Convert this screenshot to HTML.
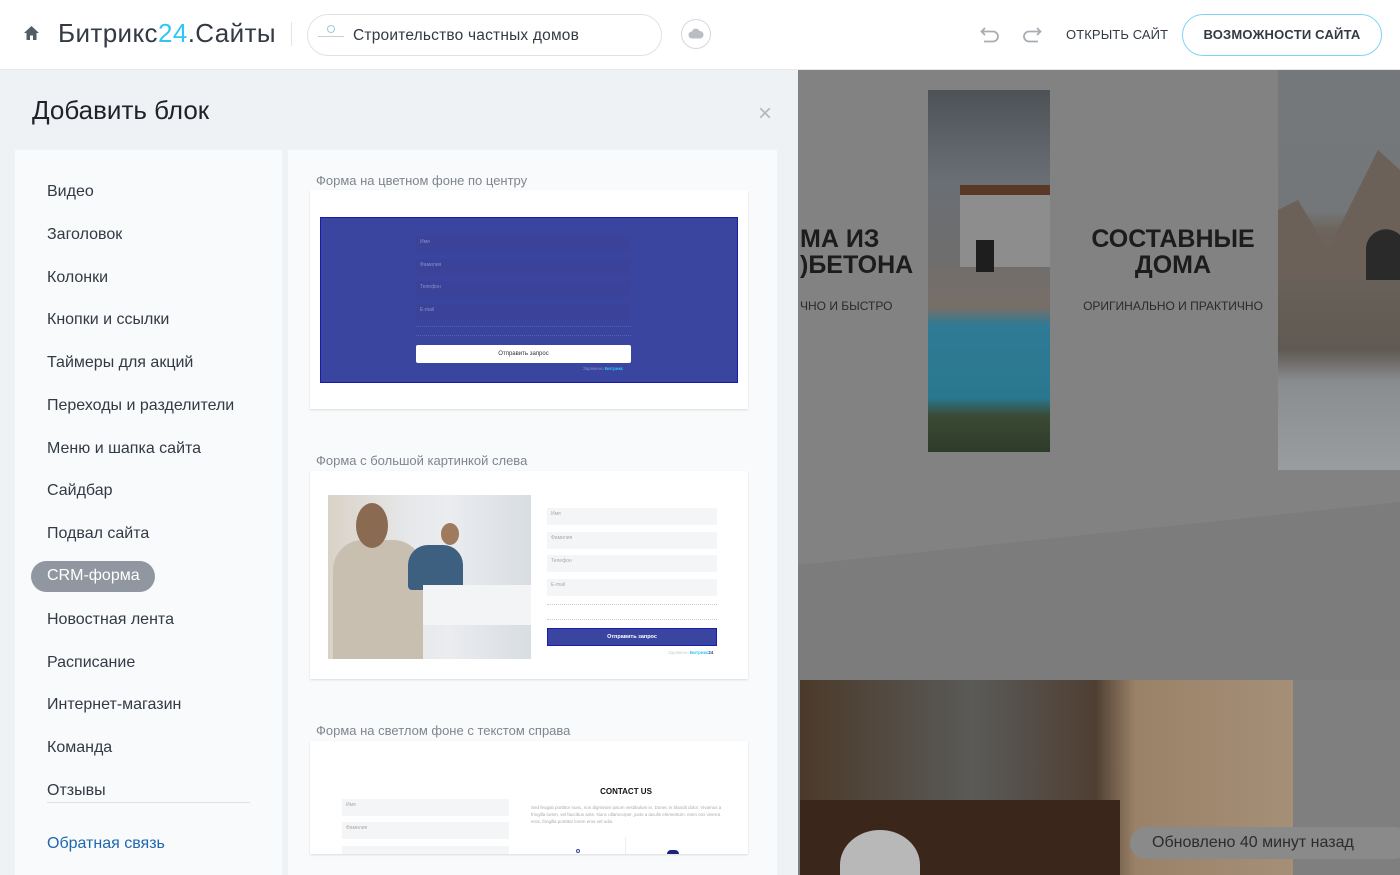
<!DOCTYPE html>
<html><head><meta charset="utf-8"><style>
*{margin:0;padding:0;box-sizing:border-box}
html,body{width:1400px;height:875px;overflow:hidden}
body{font-family:"Liberation Sans",sans-serif;background:#7f7f7f;position:relative}
.hdr{position:absolute;left:0;top:0;width:1400px;height:70px;background:#fff;border-bottom:1px solid #e6e8ea}
.abs{position:absolute}
.panel{position:absolute;left:0;top:70px;width:798px;height:805px;background:#eef2f4}
.side{position:absolute;left:15px;top:150px;width:267px;height:725px;background:#f8fafb}
.side div{position:absolute;left:32px;font-size:16px;color:#333a44}
.col{position:absolute;left:288px;top:150px;width:489px;height:725px;background:#f8fafb}
.ttl{position:absolute;left:316px;font-size:13px;color:#80868e}
.card{position:absolute;left:310px;width:438px;background:#fff;box-shadow:0 1px 2px rgba(0,0,0,.12)}
.inp{position:absolute;font-size:5px;color:#aaa;padding:3px 4px}
</style></head><body>
<div class="hdr">
 <svg class="abs" style="left:23px;top:25px" width="17" height="16" viewBox="0 0 17 16"><path d="M8.5 1 L16 8 H13.5 V15 H10 V10.5 H7 V15 H3.5 V8 H1 Z" fill="#535c69"/></svg>
 <div class="abs" style="left:58px;top:18px;font-size:26px;color:#333a44;letter-spacing:.4px">Битрикс<span style="color:#2fc6f6">24</span>.Сайты</div>
 <div class="abs" style="left:291px;top:22px;width:1px;height:24px;background:#e2e4e6"></div>
 <div class="abs" style="left:307px;top:14px;width:355px;height:42px;border:1px solid #dfe2e5;border-radius:21px"></div>
 <div class="abs" style="left:318px;top:25px;width:26px;height:14px"><div style="margin:0 auto;width:8px;height:8px;border-radius:50%;border:1px solid #9cd"></div><div style="margin-top:3px;height:1px;background:#ccc"></div></div>
 <div class="abs" style="left:353px;top:27px;font-size:15.5px;color:#333a44;letter-spacing:.2px">Строительство частных домов</div>
 <div class="abs" style="left:681px;top:19px;width:30px;height:30px;border:1px solid #d5d8db;border-radius:50%"></div>
 <svg class="abs" style="left:688px;top:28px" width="16" height="11" viewBox="0 0 16 11"><path d="M4 10.5 A3.5 3.5 0 0 1 4 3.5 A4 4 0 0 1 11.5 3 A3.5 3.5 0 0 1 12 10.5 Z" fill="#b9bec4"/></svg>
 <svg class="abs" style="left:980px;top:26px" width="20" height="18" viewBox="0 0 20 18"><path d="M5 2 L1.5 5.5 L5 9 M1.5 5.5 H13 A5 5 0 0 1 13 15.5 H4" fill="none" stroke="#a8adb3" stroke-width="1.8"/></svg>
 <svg class="abs" style="left:1022px;top:26px" width="20" height="18" viewBox="0 0 20 18"><path d="M15 2 L18.5 5.5 L15 9 M18.5 5.5 H7 A5 5 0 0 0 7 15.5 H16" fill="none" stroke="#a8adb3" stroke-width="1.8"/></svg>
 <div class="abs" style="left:1066px;top:27px;font-size:13px;color:#333a44;letter-spacing:.1px">ОТКРЫТЬ САЙТ</div>
 <div class="abs" style="left:1182px;top:14px;width:200px;height:42px;border:1px solid #7fd4f5;border-radius:21px;font-size:13px;font-weight:bold;color:#333a44;text-align:center;line-height:40px;letter-spacing:.2px">ВОЗМОЖНОСТИ САЙТА</div>
</div>

<div class="abs" style="left:798px;top:70px;width:602px;height:495px;background:#828282"></div>
<svg class="abs" style="left:798px;top:480px" width="602" height="110"><polygon points="0,85 602,22 602,110 0,110" fill="#7c7c7c"/></svg>
<div class="abs" style="left:798px;top:565px;width:602px;height:115px;background:#7c7c7c"></div>
<div class="abs" style="left:800px;top:226px;font-size:25px;font-weight:bold;color:#1c1c1c;line-height:26px">МА ИЗ<br>)БЕТОНА</div>
<div class="abs" style="left:800px;top:299px;font-size:12px;color:#2a2a2a">ЧНО И БЫСТРО</div>
<div class="abs" style="left:1070px;top:226px;width:206px;text-align:center;font-size:25px;font-weight:bold;color:#1c1c1c;line-height:26px">СОСТАВНЫЕ<br>ДОМА</div>
<div class="abs" style="left:1070px;top:299px;width:206px;text-align:center;font-size:12px;color:#2a2a2a">ОРИГИНАЛЬНО И ПРАКТИЧНО</div>
<div class="abs" style="left:928px;top:90px;width:122px;height:362px;overflow:hidden;background:linear-gradient(#4d5257 0%,#6a6f75 25%,#6e6e6e 45%,#786e68 60%,#2f7a95 65%,#2a7890 85%,#3a4a34 90%,#2e3b2a 100%)">
 <div class="abs" style="left:32px;top:95px;width:90px;height:82px;background:#8d8d8d"></div>
 <div class="abs" style="left:32px;top:95px;width:90px;height:10px;background:#5a3a26"></div>
 <div class="abs" style="left:48px;top:150px;width:18px;height:32px;background:#1e1e1e"></div></div>
<div class="abs" style="left:1278px;top:70px;width:122px;height:400px;overflow:hidden;background:linear-gradient(#74787b 0%,#74777a 35%,#6d655c 40%,#5f5a53 70%,#8a8d90 78%,#9a9da0 100%)">
 <svg class="abs" style="left:0;top:70px" width="122" height="140"><polygon points="0,70 20,60 50,110 100,10 122,30 122,140 0,140" fill="#6b6158"/><path d="M88 140 V110 A20 20 0 0 1 122 95 V140 Z" fill="#2a2a2a"/></svg></div>
<div class="abs" style="left:800px;top:680px;width:493px;height:195px;overflow:hidden;background:linear-gradient(90deg,#4b3a2a 0%,#5a5a58 35%,#4f3f33 60%,#9a8268 68%,#a58f77 100%)">
 <div class="abs" style="left:0;top:120px;width:320px;height:75px;background:#3b261c"></div>
 <div class="abs" style="left:40px;top:150px;width:80px;height:70px;border-radius:50% 50% 0 0;background:#b8b8b8"></div></div>
<div class="abs" style="left:1130px;top:827px;width:280px;height:32px;border-radius:16px;background:#8a8a8a;font-size:16px;color:#2c2c2c;line-height:32px;padding-left:22px">Обновлено 40 минут назад</div>

<div class="panel">
 <div class="abs" style="left:32px;top:25px;font-size:26px;color:#1f2329;font-weight:300">Добавить блок</div>
 <div class="abs" style="left:758px;top:30px;font-size:24px;color:#b4b8bd">×</div>
</div>
<div class="side">
 <div style="top:33px">Видео</div><div style="top:76px">Заголовок</div><div style="top:119px">Колонки</div>
 <div style="top:161px">Кнопки и ссылки</div><div style="top:204px">Таймеры для акций</div>
 <div style="top:247px">Переходы и разделители</div><div style="top:290px">Меню и шапка сайта</div>
 <div style="top:332px">Сайдбар</div><div style="top:375px">Подвал сайта</div>
 <div style="left:16px;top:411px;width:124px;height:31px;border-radius:16px;background:#9097a0;color:#fff;padding:6px 0 0 16px">CRM-форма</div>
 <div style="top:461px">Новостная лента</div><div style="top:504px">Расписание</div>
 <div style="top:546px">Интернет-магазин</div><div style="top:589px">Команда</div>
 <div style="top:632px;width:203px;border-bottom:1px solid #dfe3e6;padding-bottom:2px">Отзывы</div>
 <div style="top:685px;color:#2067b0">Обратная связь</div>
</div>
<div class="col"></div>

<div class="ttl" style="top:173px">Форма на цветном фоне по центру</div>
<div class="card" style="top:190px;height:219px">
 <div class="abs" style="left:10px;top:27px;width:418px;height:166px;background:#3a45a0;border:1px solid #1a1ab0">
  <div class="inp" style="left:95px;top:18px;width:215px;height:16px;background:#3a4399;color:#8890c8">Имя</div>
  <div class="inp" style="left:95px;top:41px;width:215px;height:16px;background:#3a4399;color:#8890c8">Фамилия</div>
  <div class="inp" style="left:95px;top:63px;width:215px;height:16px;background:#3a4399;color:#8890c8">Телефон</div>
  <div class="inp" style="left:95px;top:86px;width:215px;height:16px;background:#3a4399;color:#8890c8">E-mail</div>
  <div class="abs" style="left:95px;top:108px;width:215px;height:10px;border-top:1px dotted #6a72b8;border-bottom:1px dotted #6a72b8;opacity:.6"></div>
  <div class="abs" style="left:95px;top:127px;width:215px;height:18px;background:#fff;border-radius:2px;font-size:6px;text-align:center;line-height:18px;color:#333">Отправить запрос</div>
  <div class="abs" style="left:262px;top:148px;font-size:4.5px;color:#8890c8">Заряжено <b style="color:#2fc6f6">Битрикс</b></div>
 </div>
</div>

<div class="ttl" style="top:453px">Форма с большой картинкой слева</div>
<div class="card" style="top:471px;height:208px">
 <div class="abs" style="left:18px;top:24px;width:203px;height:164px;overflow:hidden;background:linear-gradient(90deg,#d9d2c7 0%,#e6e8ea 40%,#eaecef 60%,#d8dde2 100%)">
  <div class="abs" style="left:5px;top:45px;width:90px;height:119px;background:#c9bfb1;border-radius:30px 30px 0 0"></div>
  <div class="abs" style="left:28px;top:8px;width:32px;height:45px;background:#8a6a50;border-radius:50%"></div>
  <div class="abs" style="left:80px;top:50px;width:55px;height:45px;background:#3d5f80;border-radius:20px 20px 4px 4px"></div>
  <div class="abs" style="left:113px;top:28px;width:18px;height:22px;background:#a07a5d;border-radius:50%"></div>
  <div class="abs" style="left:95px;top:90px;width:108px;height:40px;background:#f3f4f5"></div>
 </div>
 <div class="inp" style="left:237px;top:37px;width:170px;height:17px;background:#f4f5f6">Имя</div>
 <div class="inp" style="left:237px;top:61px;width:170px;height:17px;background:#f4f5f6">Фамилия</div>
 <div class="inp" style="left:237px;top:84px;width:170px;height:17px;background:#f4f5f6">Телефон</div>
 <div class="inp" style="left:237px;top:108px;width:170px;height:17px;background:#f4f5f6">E-mail</div>
 <div class="abs" style="left:237px;top:133px;width:170px;height:16px;border-top:1px dotted #ccc;border-bottom:1px dotted #ccc"></div>
 <div class="abs" style="left:237px;top:157px;width:170px;height:18px;background:#3a45a0;border:1px solid #1a1ab0;font-size:5.5px;font-weight:bold;color:#fff;text-align:center;line-height:16px">Отправить запрос</div>
 <div class="abs" style="left:358px;top:179px;font-size:4.5px;color:#ccc">Заряжено <b style="color:#2fc6f6">Битрикс</b><b style="color:#1e4a80">24</b></div>
</div>

<div class="ttl" style="top:723px">Форма на светлом фоне с текстом справа</div>
<div class="card" style="top:741px;height:113px;overflow:hidden">
 <div class="inp" style="left:32px;top:58px;width:167px;height:17px;background:#f4f5f6">Имя</div>
 <div class="inp" style="left:32px;top:81px;width:167px;height:17px;background:#f4f5f6">Фамилия</div>
 <div class="inp" style="left:32px;top:105px;width:167px;height:8px;background:#f4f5f6"></div>
 <div class="abs" style="left:220px;top:46px;width:192px;text-align:center;font-size:8px;font-weight:bold;color:#111">CONTACT US</div>
 <div class="abs" style="left:221px;top:63px;width:192px;font-size:4.5px;line-height:7px;color:#aaa">Sed feugiat porttitor nunc, non dignissim ipsum vestibulum in. Donec in blandit dolor. Vivamus a fringilla lorem, vel faucibus ante. Nunc ullamcorper, justo a iaculis elementum, enim orci viverra eros, fringilla porttitor lorem eros vel odio.</div>
 <div class="abs" style="left:266px;top:108px;width:4px;height:4px;border:1px solid #3a45a0;border-radius:50%"></div>
 <div class="abs" style="left:315px;top:96px;width:1px;height:17px;background:#eee"></div>
 <div class="abs" style="left:357px;top:109px;width:12px;height:4px;background:#1a237e;border-radius:6px 6px 0 0"></div>
</div>
</body></html>
